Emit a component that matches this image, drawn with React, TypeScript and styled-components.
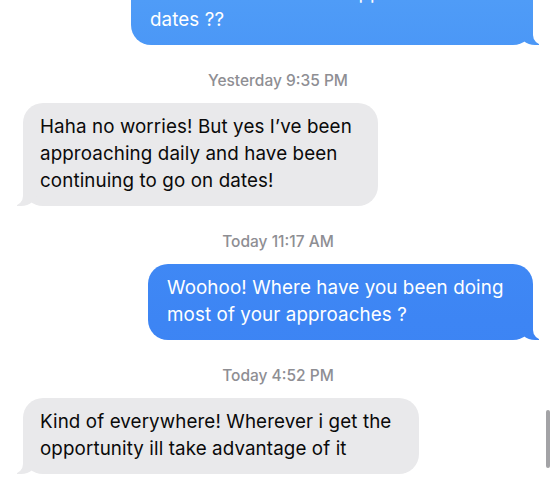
import React from "react";
import styled, { createGlobalStyle } from "styled-components";

const Global = createGlobalStyle`
  html, body { margin: 0; padding: 0; background: #ffffff; }
  body { overflow: hidden; font-family: Inter, "Noto Sans", "Liberation Sans", sans-serif; }
`;

const BLUE = "linear-gradient(180deg, #4F9CF7 0px, #4590F6 120px, #3D85F4 320px, #3A81F3 480px) fixed";
const GRAY = "#E9E9EB";

const Screen = styled.div`
  position: relative;
  width: 555px;
  height: 480px;
  overflow: hidden;
  background: #fff;
`;

const Thread = styled.div`
  display: flex;
  flex-direction: column;
  padding: 0 22px 0 23px;
  margin-top: -31px;
`;

const Row = styled.div<{ $sent: boolean }>`
  display: flex;
  justify-content: ${(p) => (p.$sent ? "flex-end" : "flex-start")};
`;

const Bubble = styled.div<{ $sent: boolean; $w: number }>`
  position: relative;
  box-sizing: border-box;
  width: ${(p) => p.$w}px;
  padding: 10px ${(p) => (p.$sent ? 16 : 15)}px 12px ${(p) => (p.$sent ? 19 : 17)}px;
  border-radius: 20px;
  background: ${(p) => (p.$sent ? BLUE : GRAY)};
  color: ${(p) => (p.$sent ? "#ffffff" : "#0a0a0a")};
  font-size: 18.8px;
  line-height: 27px;
  letter-spacing: 0.1px;
  white-space: nowrap;

  &::before,
  &::after {
    content: "";
    position: absolute;
    bottom: 0;
    height: 20px;
  }
  &::before {
    ${(p) => (p.$sent ? "right: -6px;" : "left: -6px;")}
    width: 20px;
    background: ${(p) => (p.$sent ? BLUE : GRAY)};
    ${(p) =>
      p.$sent
        ? "border-bottom-left-radius: 16px 14px;"
        : "border-bottom-right-radius: 16px 14px;"}
  }
  &::after {
    ${(p) => (p.$sent ? "right: -26px;" : "left: -26px;")}
    width: 26px;
    background: #ffffff;
    ${(p) =>
      p.$sent ? "border-bottom-left-radius: 10px;" : "border-bottom-right-radius: 10px;"}
  }
`;

const Line = styled.div`
  position: relative;
  z-index: 1;
`;

const Stamp = styled.div`
  margin: 26px 0 12px;
  text-align: center;
  font-size: 15.5px;
  line-height: 20px;
  color: #8E8E93;
  font-weight: 500;
`;

const ScrollThumb = styled.div`
  position: absolute;
  right: 5px;
  top: 410px;
  width: 4px;
  height: 58px;
  border-radius: 2px;
  background: #A3A3A6;
`;

type Item =
  | { kind: "stamp"; day: string; time: string }
  | { kind: "msg"; sent: boolean; w: number; lines: string[] };

const items: Item[] = [
  {
    kind: "msg",
    sent: true,
    w: 402,
    lines: ["Hi! Did all those other apps lead to more", "dates ??"],
  },
  { kind: "stamp", day: "Yesterday", time: "9:35 PM" },
  {
    kind: "msg",
    sent: false,
    w: 355,
    lines: [
      "Haha no worries! But yes I\u2019ve been",
      "approaching daily and have been",
      "continuing to go on dates!",
    ],
  },
  { kind: "stamp", day: "Today", time: "11:17 AM" },
  {
    kind: "msg",
    sent: true,
    w: 385,
    lines: ["Woohoo! Where have you been doing", "most of your approaches ?"],
  },
  { kind: "stamp", day: "Today", time: "4:52 PM" },
  {
    kind: "msg",
    sent: false,
    w: 396,
    lines: ["Kind of everywhere! Wherever i get the", "opportunity ill take advantage of it"],
  },
];

export default function App() {
  return (
    <Screen>
      <Global />
      <Thread>
        {items.map((it, i) =>
          it.kind === "stamp" ? (
            <Stamp key={i}>
              {it.day} {it.time}
            </Stamp>
          ) : (
            <Row key={i} $sent={it.sent}>
              <Bubble $sent={it.sent} $w={it.w}>
                {it.lines.map((l, j) => (
                  <Line key={j}>{l}</Line>
                ))}
              </Bubble>
            </Row>
          )
        )}
      </Thread>
      <ScrollThumb />
    </Screen>
  );
}
